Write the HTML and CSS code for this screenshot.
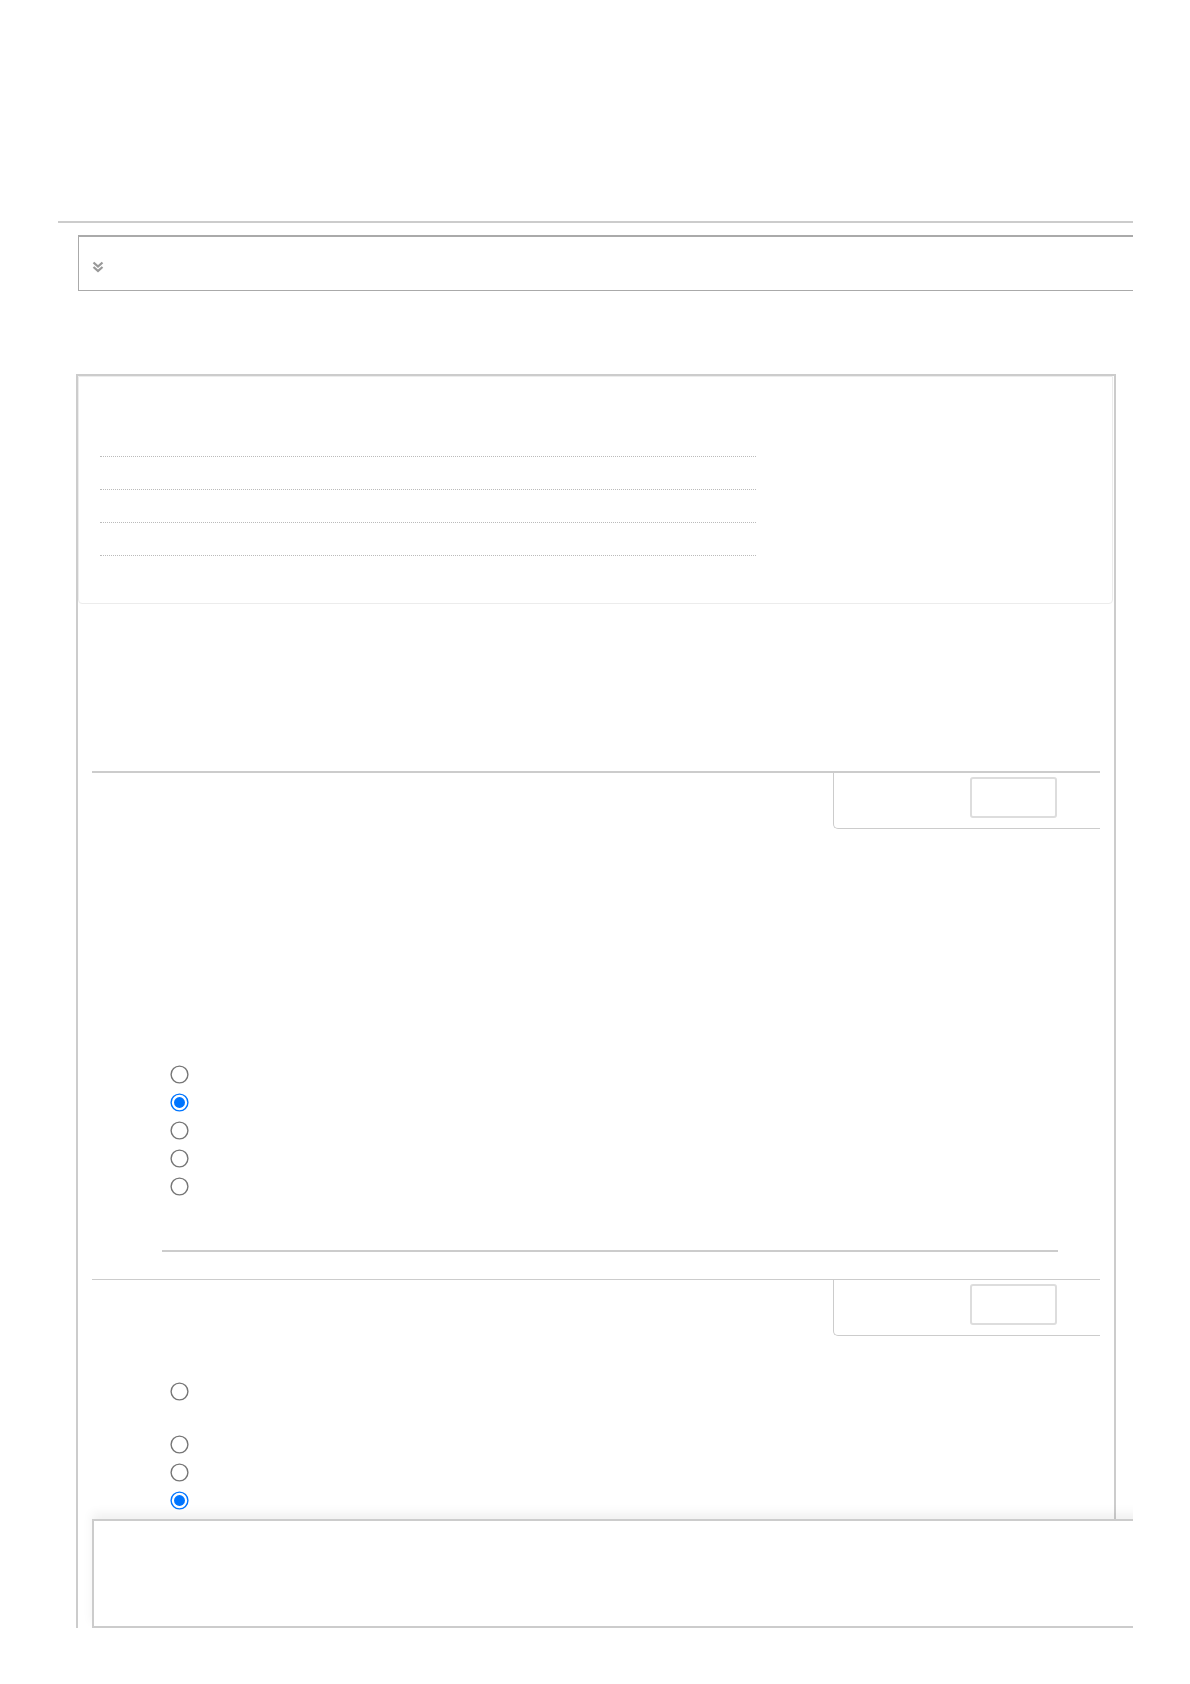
FILE: index.html
```html
<!doctype html>
<html lang="en">
<head>
	<meta http-equiv="Content-Type" content="text/html; charset=utf-8">
	<title>Quiz attempt</title>
	<link rel="stylesheet" href="styles.css">
</head>
<body>
<div class="page">
	<div class="top-rule"></div>

	<!-- collapsed settings bar -->
	<div class="toggle-bar">
		<svg class="chevron" width="12" height="12" viewBox="0 0 12 12">
			<polyline points="1.5,1.5 6,5.5 10.5,1.5" />
			<polyline points="1.5,6 6,10 10.5,6" />
		</svg>
	</div>

	<div class="quiz-card">
		<!-- summary table -->
		<div class="summary">
			<div class="summary-row"></div>
			<div class="summary-row"></div>
			<div class="summary-row"></div>
			<div class="summary-row"></div>
		</div>

		<!-- question 1 -->
		<div class="question q-first">
			<div class="q-head">
				<div class="q-info"><div class="q-flag"></div></div>
			</div>
			<form class="answers">
				<label class="answer"><input type="radio" name="q1"></label>
				<label class="answer"><input type="radio" name="q1" checked></label>
				<label class="answer"><input type="radio" name="q1"></label>
				<label class="answer"><input type="radio" name="q1"></label>
				<label class="answer"><input type="radio" name="q1"></label>
			</form>
			<div class="q-rule"></div>
		</div>

		<!-- question 2 -->
		<div class="question q-second">
			<div class="q-head">
				<div class="q-info"><div class="q-flag"></div></div>
			</div>
			<form class="answers">
				<label class="answer tall"><input type="radio" name="q2"></label>
				<label class="answer"><input type="radio" name="q2"></label>
				<label class="answer"><input type="radio" name="q2"></label>
				<label class="answer"><input type="radio" name="q2" checked></label>
			</form>
		</div>
	</div>

	<!-- navigation panel stuck to the bottom -->
	<div class="nav-panel"></div>
</div>
</body>
</html>
```

FILE: styles.css
```css
* { box-sizing: border-box; }
body { margin: 0; font-family: "Liberation Sans", Arial, sans-serif; background: #fff; }

.page {
  position: relative;
  margin-left: 58px;
  width: 1075px;
  height: 1628px;
  overflow: hidden;
}

.top-rule {
  margin-top: 221px;
  height: 2px;
  background: #ccc;
}

/* collapsed bar */
.toggle-bar {
  margin-top: 12px;
  margin-left: 20px;
  width: 1100px;
  height: 56px;
  padding: 24px 0 0 13px;
  border-top: 2px solid #aaa;
  border-left: 1px solid #aaa;
  border-bottom: 1px solid #aaa;
}
.chevron { display: block; }
.chevron polyline {
  fill: none;
  stroke: #999;
  stroke-width: 2.3;
}

/* main card */
.quiz-card {
  margin-top: 83px;
  margin-left: 18px;
  width: 1040px;
  height: 1400px;
  border: 2px solid #ccc;
  border-bottom: none;
}

.summary {
  margin-right: 1px;
  padding: 47px 0 47px 21px;
  border: 1px solid #ececec;
  border-radius: 0 0 4px 4px;
}
.summary-row {
  width: 656px;
  height: 33px;
  border-bottom: 1px dotted #bbb;
}

/* questions */
.question { margin: 0 14px; }
.q-first { margin-top: 167px; }
.q-second { margin-top: 27px; }

.q-head {
  display: flex;
  justify-content: flex-end;
  border-top: 2px solid #ccc;
}
.q-second .q-head { border-top-width: 1px; }

.q-info {
  width: 267px;
  height: 56px;
  padding-top: 4px;
  border-left: 1px solid #ccc;
  border-bottom: 1px solid #ccc;
  border-bottom-left-radius: 5px;
}
.q-flag {
  width: 87px;
  height: 41px;
  margin-left: auto;
  margin-right: 43px;
  border: 2px solid #ddd;
  border-radius: 3px;
}

.answers {
  margin: 231px 0 0 0;
  padding-left: 78px;
}
.q-second .answers { margin-top: 41px; }

.answer {
  display: flex;
  align-items: flex-start;
  height: 28px;
}
.answer.tall { height: 53px; }
/* default 13px radio blown up, like the original page does */
.answer input {
  width: 13px;
  height: 13px;
  margin: 7.5px 0 0 2.5px;
  transform: scale(1.4);
}

.q-rule {
  margin: 50px 42px 0 70px;
  height: 2px;
  background: #ccc;
}

/* bottom navigation */
.nav-panel {
  position: absolute;
  left: 34px;
  right: -20px;
  bottom: 0;
  height: 109px;
  background: #fff;
  border: 2px solid #ccc;
  box-shadow: 0 -6px 10px rgba(0, 0, 0, 0.06);
}
```
